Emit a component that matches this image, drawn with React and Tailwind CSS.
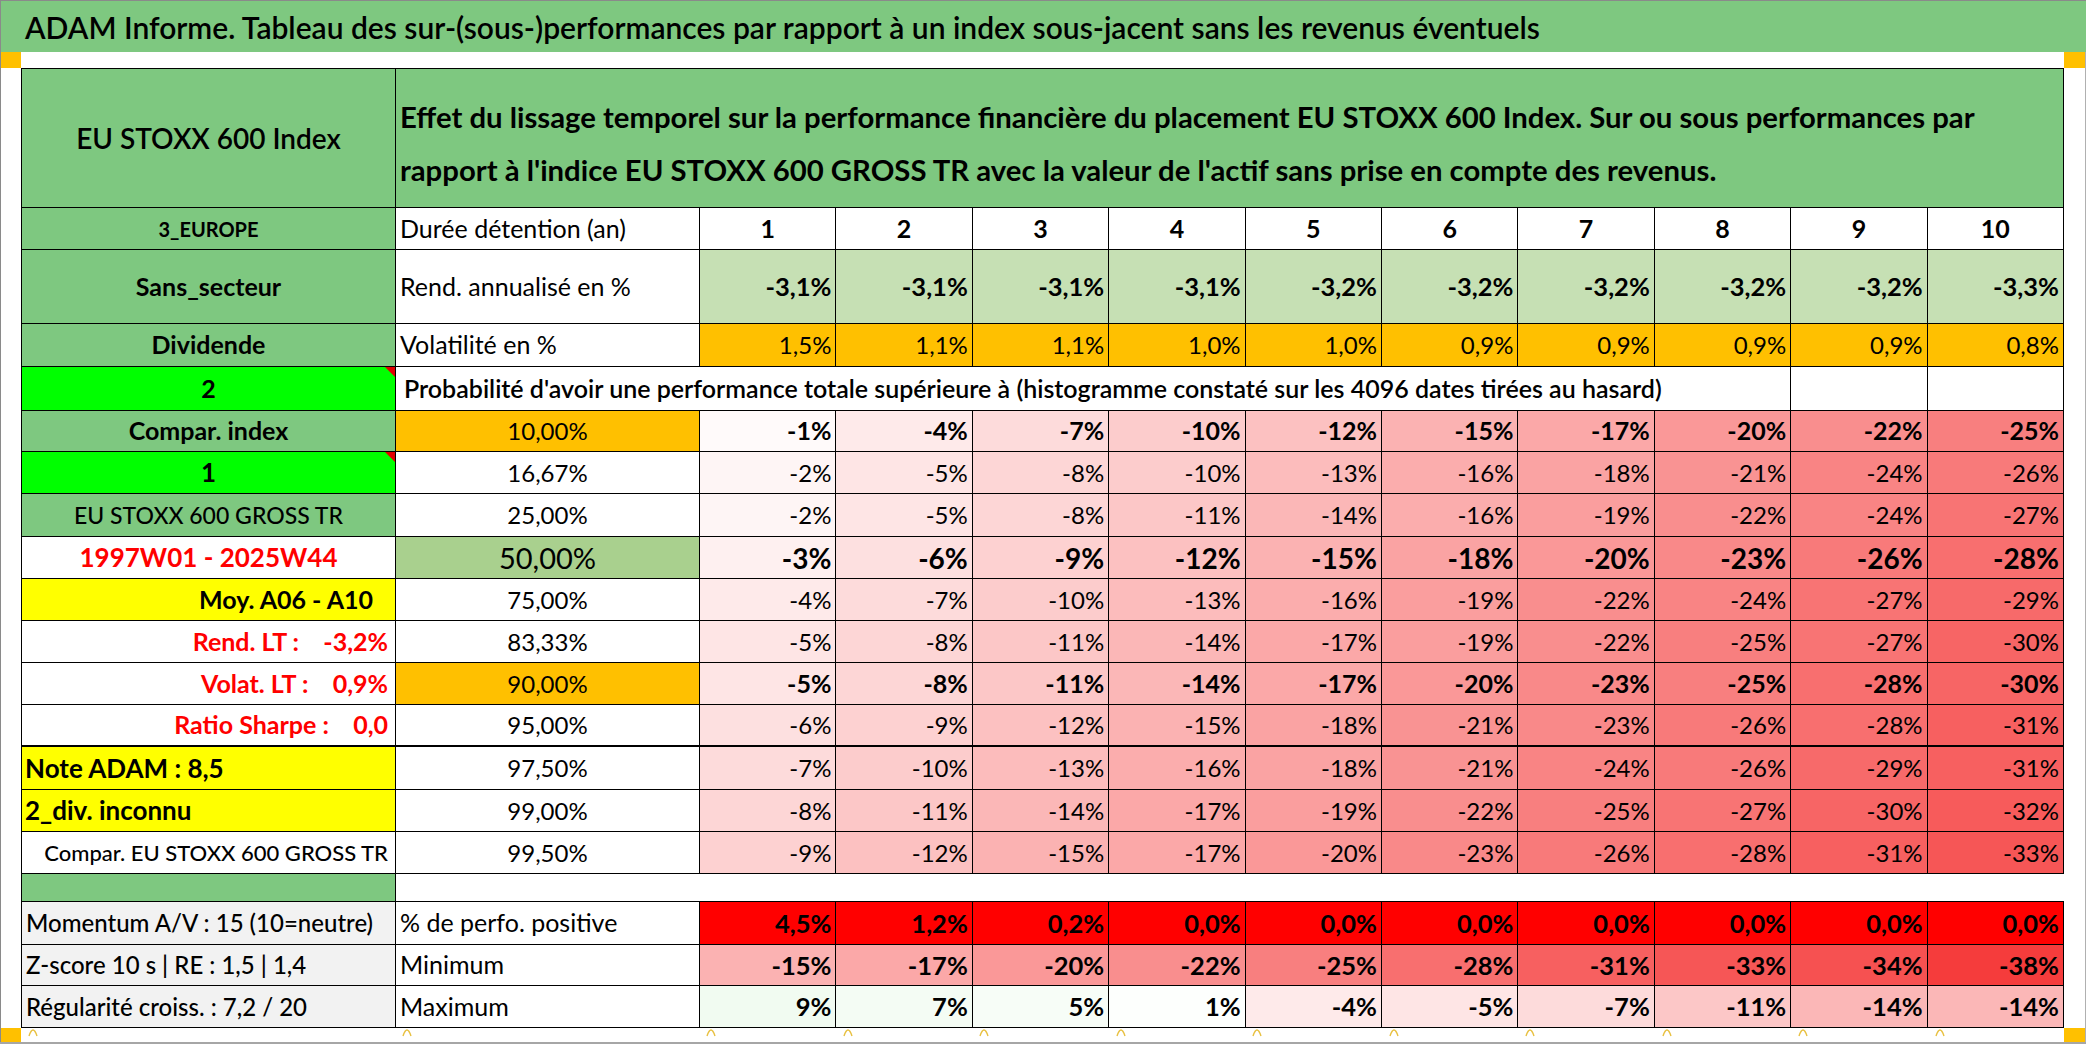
import React from 'react';

const G = 'bg-[#7ec880]';

function heat(v) {
  if (v > 0) {
    const t = Math.min(1, v / 9);
    const c = Math.round(255 - t * 14);
    return `rgb(${c},${Math.round(255 - t * 4)},${c})`;
  }
  const t = Math.min(1, -v / 38);
  const g = Math.round(255 - t * 195);
  return `rgb(${Math.round(255 - t * 10)},${g},${g})`;
}

function C({ cls = '', bb = 'border-b', children, style }) {
  return (
    <div
      className={`relative flex items-center overflow-hidden whitespace-nowrap border-r border-black ${bb} ${cls}`}
      style={style}
    >
      {children}
    </div>
  );
}

function Tri() {
  return (
    <div className="absolute top-0 right-0 w-0 h-0 border-l-[10px] border-l-transparent border-t-[10px] border-t-[#e00000]" />
  );
}

function Mark() {
  return (
    <svg width="12" height="8" viewBox="0 0 12 8" className="ml-[6px] mt-[1px]">
      <path d="M2 7 Q4 1 6 1 Q8 1 10 7" fill="none" stroke="#e8c040" strokeWidth="1.4" />
    </svg>
  );
}

const rend = ['-3,1%', '-3,1%', '-3,1%', '-3,1%', '-3,2%', '-3,2%', '-3,2%', '-3,2%', '-3,2%', '-3,3%'];
const vol = ['1,5%', '1,1%', '1,1%', '1,0%', '1,0%', '0,9%', '0,9%', '0,9%', '0,9%', '0,8%'];

const matrix = [
  {
    h: 'h-[41px]',
    a: <span className="font-bold text-[25px]">Compar. index</span>,
    aCls: `${G} justify-center`,
    pct: '10,00%',
    pCls: 'bg-[#ffc000]',
    vCls: 'font-bold text-[25px]',
    vals: [-1, -4, -7, -10, -12, -15, -17, -20, -22, -25],
  },
  {
    h: 'h-[42px]',
    a: <span className="font-bold text-[26px]">1</span>,
    aCls: 'bg-[#00ff00] justify-center',
    tri: true,
    pct: '16,67%',
    pCls: '',
    vCls: 'text-[24px]',
    vals: [-2, -5, -8, -10, -13, -16, -18, -21, -24, -26],
  },
  {
    h: 'h-[43px]',
    a: <span className="font-medium text-[23px]">EU STOXX 600 GROSS TR</span>,
    aCls: `${G} justify-center`,
    pct: '25,00%',
    pCls: '',
    vCls: 'text-[24px]',
    vals: [-2, -5, -8, -11, -14, -16, -19, -22, -24, -27],
  },
  {
    h: 'h-[42px]',
    a: <span className="font-bold text-[26px] text-[#ff0000]">1997W01 - 2025W44</span>,
    aCls: 'justify-center',
    pct: '50,00%',
    pCls: 'bg-[#a9d08e] text-[29px]',
    vCls: 'font-bold text-[28px]',
    vals: [-3, -6, -9, -12, -15, -18, -20, -23, -26, -28],
  },
  {
    h: 'h-[42px]',
    a: <span className="font-bold text-[25px]">Moy. A06 - A10</span>,
    aCls: 'bg-[#ffff00] justify-end pr-[22px]',
    pct: '75,00%',
    pCls: '',
    vCls: 'text-[24px]',
    vals: [-4, -7, -10, -13, -16, -19, -22, -24, -27, -29],
  },
  {
    h: 'h-[42px]',
    a: <span className="font-bold text-[25px] text-[#ff0000] whitespace-pre">{'Rend. LT :    -3,2%'}</span>,
    aCls: 'justify-end pr-[7px]',
    pct: '83,33%',
    pCls: '',
    vCls: 'text-[24px]',
    vals: [-5, -8, -11, -14, -17, -19, -22, -25, -27, -30],
  },
  {
    h: 'h-[42px]',
    a: <span className="font-bold text-[25px] text-[#ff0000] whitespace-pre">{'Volat. LT :    0,9%'}</span>,
    aCls: 'justify-end pr-[7px]',
    pct: '90,00%',
    pCls: 'bg-[#ffc000]',
    vCls: 'font-bold text-[25px]',
    vals: [-5, -8, -11, -14, -17, -20, -23, -25, -28, -30],
  },
  {
    h: 'h-[42px]',
    bb: 'border-b-2',
    a: <span className="font-bold text-[25px] text-[#ff0000] whitespace-pre">{'Ratio Sharpe :    0,0'}</span>,
    aCls: 'justify-end pr-[7px]',
    pct: '95,00%',
    pCls: '',
    vCls: 'text-[24px]',
    vals: [-6, -9, -12, -15, -18, -21, -23, -26, -28, -31],
  },
  {
    h: 'h-[43px]',
    a: <span className="font-bold text-[26px]">Note ADAM : 8,5</span>,
    aCls: 'bg-[#ffff00] justify-start pl-[3px]',
    pct: '97,50%',
    pCls: '',
    vCls: 'text-[24px]',
    vals: [-7, -10, -13, -16, -18, -21, -24, -26, -29, -31],
  },
  {
    h: 'h-[42px]',
    a: <span className="font-bold text-[26px]">2_div. inconnu</span>,
    aCls: 'bg-[#ffff00] justify-start pl-[3px]',
    pct: '99,00%',
    pCls: '',
    vCls: 'text-[24px]',
    vals: [-8, -11, -14, -17, -19, -22, -25, -27, -30, -32],
  },
  {
    h: 'h-[42px]',
    a: <span className="font-medium text-[22px]">Compar. EU STOXX 600 GROSS TR</span>,
    aCls: 'justify-end pr-[7px]',
    pct: '99,50%',
    pCls: '',
    vCls: 'text-[24px]',
    vals: [-9, -12, -15, -17, -20, -23, -26, -28, -31, -33],
  },
];

const pos = ['4,5%', '1,2%', '0,2%', '0,0%', '0,0%', '0,0%', '0,0%', '0,0%', '0,0%', '0,0%'];
const mins = [-15, -17, -20, -22, -25, -28, -31, -33, -34, -38];
const maxs = [9, 7, 5, 1, -4, -5, -7, -11, -14, -14];

export default function App() {
  return (
    <div className="w-[2086px] h-[1044px] bg-white font-['Lato',sans-serif] text-black overflow-hidden">
      {/* title bar */}
      <div className={`h-[52px] ${G} border-t border-l border-[#8a8a8a] flex items-center pl-[24px] pt-[2px] text-[30px] font-semibold whitespace-nowrap`}>
        ADAM Informe. Tableau des sur-(sous-)performances par rapport à un index sous-jacent sans les revenus éventuels
      </div>

      <div className="flex h-[992px] border-b-2 border-[#a6a6a6]">
        {/* left gutter */}
        <div className="w-[21px] flex flex-col border-l border-[#8a8a8a]">
          <div className="h-[16px] bg-[#ffc000]" />
          <div className="flex-1" />
          <div className="h-[14px] bg-[#ffc000]" />
        </div>

        {/* main */}
        <div className="w-[2043px] flex flex-col">
          <div className="h-[16px]" />
          <div className="grid grid-cols-[374px_304px_repeat(10,minmax(0,1fr))] border-t border-l border-black">
            {/* header */}
            <C cls={`h-[139px] ${G} justify-center text-[28px] font-semibold`}>EU STOXX 600 Index</C>
            <C cls={`h-[139px] ${G} col-span-11 pl-[4px] pt-[9px] text-[29.3px] font-bold leading-[53px]`}>
              <div>
                Effet du lissage temporel sur la performance financière du placement EU STOXX 600 Index. Sur ou sous performances par
                <br />
                rapport à l'indice EU STOXX 600 GROSS TR avec la valeur de l'actif sans prise en compte des revenus.
              </div>
            </C>

            {/* durée */}
            <C cls={`h-[42px] ${G} justify-center font-bold text-[20px]`}>3_EUROPE</C>
            <C cls="h-[42px] pl-[4px] text-[25px]">Durée détention (an)</C>
            {[1, 2, 3, 4, 5, 6, 7, 8, 9, 10].map((n) => (
              <C key={n} cls="h-[42px] justify-center font-bold text-[25px]">{n}</C>
            ))}

            {/* rend */}
            <C cls={`h-[74px] ${G} justify-center font-bold text-[25px]`}>Sans_secteur</C>
            <C cls="h-[74px] pl-[4px] text-[25px]">Rend. annualisé en %</C>
            {rend.map((v, i) => (
              <C key={i} cls="h-[74px] bg-[#c6e0b4] justify-end pr-[4px] font-bold text-[25.5px]">{v}</C>
            ))}

            {/* vol */}
            <C cls={`h-[43px] ${G} justify-center font-bold text-[25px]`}>Dividende</C>
            <C cls="h-[43px] pl-[4px] text-[25px]">Volatilité en %</C>
            {vol.map((v, i) => (
              <C key={i} cls="h-[43px] bg-[#ffc000] justify-end pr-[4px] text-[24px]">{v}</C>
            ))}

            {/* probabilité */}
            <C cls="h-[44px] bg-[#00ff00] justify-center font-bold text-[25px]">
              2
              <Tri />
            </C>
            <C cls="h-[44px] col-span-9 pl-[8px] text-[25px] font-semibold">
              Probabilité d'avoir une performance totale supérieure à (histogramme constaté sur les 4096 dates tirées au hasard)
            </C>
            <C cls="h-[44px]" />
            <C cls="h-[44px]" />

            {/* matrix */}
            {matrix.map((r, ri) => (
              <React.Fragment key={ri}>
                <C cls={`${r.h} ${r.aCls}`} bb={r.bb || 'border-b'}>
                  {r.a}
                  {r.tri && <Tri />}
                </C>
                <C cls={`${r.h} justify-center text-[24px] ${r.pCls}`} bb={r.bb || 'border-b'}>
                  {r.pct}
                </C>
                {r.vals.map((v, i) => (
                  <C
                    key={i}
                    cls={`${r.h} justify-end pr-[4px] ${r.vCls}`}
                    bb={r.bb || 'border-b'}
                    style={{ backgroundColor: heat(v) }}
                  >
                    {v}%
                  </C>
                ))}
              </React.Fragment>
            ))}

            {/* gap */}
            <div className={`h-[28px] ${G} border-r border-b border-black`} />
            <div className="h-[28px] col-span-11 border-b border-black bg-white" />

            {/* bottom */}
            <C cls="h-[43px] bg-[#f2f2f2] pl-[4px] text-[24px] font-medium">Momentum A/V : 15 (10=neutre)</C>
            <C cls="h-[43px] pl-[4px] text-[25px]">% de perfo. positive</C>
            {pos.map((v, i) => (
              <C key={i} cls="h-[43px] bg-[#ff0000] justify-end pr-[4px] font-bold text-[25.5px]">{v}</C>
            ))}

            <C cls="h-[41px] bg-[#f2f2f2] pl-[4px] text-[24px] font-medium">Z-score 10 s | RE : 1,5 | 1,4</C>
            <C cls="h-[41px] pl-[4px] text-[25px]">Minimum</C>
            {mins.map((v, i) => (
              <C key={i} cls="h-[41px] justify-end pr-[4px] font-bold text-[25.5px]" style={{ backgroundColor: heat(v) }}>
                {v}%
              </C>
            ))}

            <C cls="h-[42px] bg-[#f2f2f2] pl-[4px] text-[24px] font-medium">Régularité croiss. : 7,2 / 20</C>
            <C cls="h-[42px] pl-[4px] text-[25px]">Maximum</C>
            {maxs.map((v, i) => (
              <C key={i} cls="h-[42px] justify-end pr-[4px] font-bold text-[25.5px]" style={{ backgroundColor: heat(v) }}>
                {v}%
              </C>
            ))}
          </div>
          {/* marks row */}
          <div className="grid grid-cols-[374px_304px_repeat(10,minmax(0,1fr))] h-[14px]">
            {Array.from({ length: 12 }).map((_, i) => (
              <div key={i} className="flex items-start">
                <Mark />
              </div>
            ))}
          </div>
        </div>

        {/* right gutter */}
        <div className="w-[22px] flex flex-col border-r border-[#b0b0b0]">
          <div className="h-[16px] bg-[#ffc000]" />
          <div className="flex-1" />
          <div className="h-[14px] bg-[#ffc000]" />
        </div>
      </div>
    </div>
  );
}
